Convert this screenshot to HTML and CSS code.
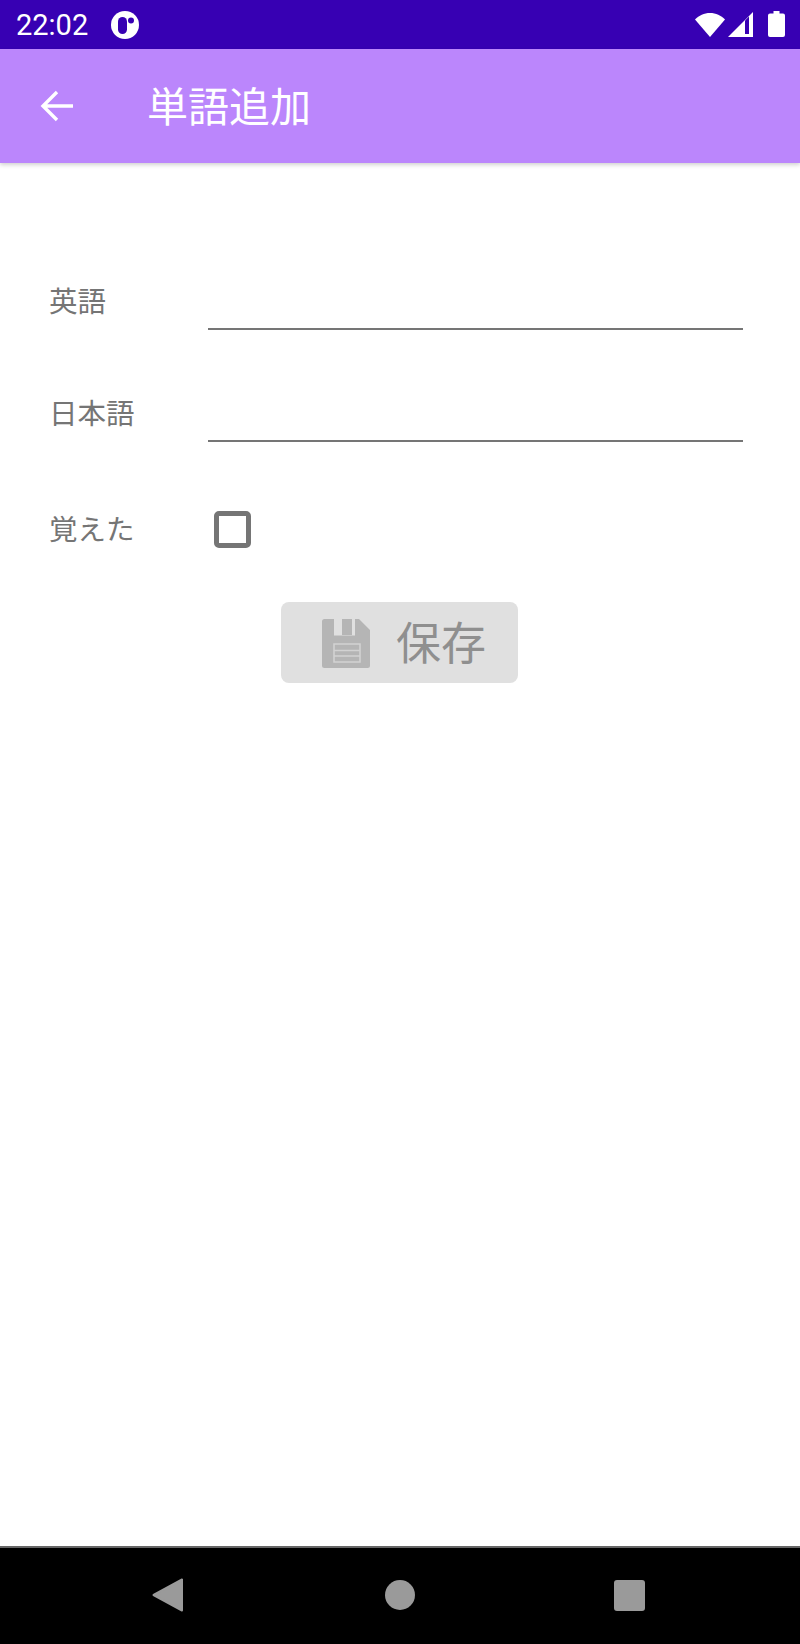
FILE: index.html
```html
<!DOCTYPE html>
<html lang="ja">
<head>
<meta charset="utf-8">
<title>単語追加</title>
<link rel="stylesheet" href="styles.css">
</head>
<body>
<div class="screen">
  <header class="status-bar">
    <div class="status-left">
      <span class="clock">22:02</span>
      <svg class="app-icon" width="30" height="30" viewBox="0 0 30 30"><circle cx="15" cy="15" r="14" fill="#fff"/><rect x="8" y="7" width="9" height="17" rx="4.500" fill="#3700b3"/><circle cx="21" cy="10.500" r="3" fill="#3700b3"/></svg>
    </div>
    <div class="status-right">
      <svg class="icon-wifi" width="30" height="24" viewBox="0 0 30 24"><path d="M0 6.500C4 2.500 9 0 15 0s11 2.500 15 6.500L15 24z" fill="#fff"/></svg>
      <svg class="icon-signal" width="25" height="25" viewBox="0 0 25 25"><path d="M25 0v25H0z" fill="#fff"/><path d="M17 8.500l4-4V22h-4z" fill="#3700b3"/></svg>
      <svg class="icon-battery" width="17" height="26" viewBox="0 0 17 26"><path d="M5.500 0h6v2.500H15a2 2 0 0 1 2 2V24a2 2 0 0 1-2 2H2a2 2 0 0 1-2-2V4.500a2 2 0 0 1 2-2h3.500z" fill="#fff"/></svg>
    </div>
  </header>
  <div class="app-bar">
    <svg class="back" width="34" height="32" viewBox="0 0 34 32"><path d="M33 16H3M17 2 3 16l14 14" fill="none" stroke="#fff" stroke-width="3.400"/></svg>
    <h1 class="title">単語追加</h1>
  </div>
  <main class="form">
    <div class="row row-en">
      <span class="label">英語</span>
      <span class="field"></span>
    </div>
    <div class="row row-ja">
      <span class="label">日本語</span>
      <span class="field"></span>
    </div>
    <div class="row row-check">
      <span class="label">覚えた</span>
      <span class="checkbox"></span>
    </div>
    <div class="actions">
      <div class="button">
        <svg class="save-icon" width="48" height="49" viewBox="0 0 48 49"><path fill-rule="evenodd" d="M2.500 0H37l11 11v35.500a2.500 2.500 0 0 1-2.500 2.500h-43A2.500 2.500 0 0 1 0 46.500v-44A2.500 2.500 0 0 1 2.500 0zM12 0h8v16h10V0h3v16.500H12z" fill="#b5b5b5"/><path d="M12 25h26v18H12zM12 31.500h26M12 37h26" fill="none" stroke="#d2d2d2" stroke-width="1.600"/></svg>
        <span class="button-text">保存</span>
      </div>
    </div>
  </main>
  <nav class="nav-bar">
    <svg class="nav-back" width="32" height="34" viewBox="0 0 32 34"><path d="M30 1.500v31L1.500 17z" fill="#9a9a9a" stroke="#9a9a9a" stroke-width="2" stroke-linejoin="round"/></svg>
    <span class="nav-circle"></span>
    <span class="nav-square"></span>
  </nav>
</div>
</body>
</html>
```
FILE: styles.css
```css
* { box-sizing: border-box; }
html, body { margin: 0; padding: 0; }
body { font-family: Roboto, "Noto Sans CJK JP", sans-serif; background: #fff; }
.screen { width: 800px; height: 1644px; display: flex; flex-direction: column; overflow: hidden; }
.status-bar { height: 49px; flex: none; background: #3700b3; display: flex; justify-content: space-between; align-items: center; padding: 0 15px 1px 16px; color: #fff; }
.status-left { display: flex; align-items: center; gap: 22px; margin-top: 2px; }
.clock { font-size: 29px; line-height: 48px; }
.status-right { display: flex; align-items: center; }
.icon-wifi { margin-top: 2px; }
.icon-signal { margin-left: 3px; margin-top: 1px; }
.icon-battery { margin-left: 15px; }
.app-bar { height: 114px; flex: none; background: #bb86fc; display: flex; align-items: center; padding: 0 0 0 40px; gap: 73px; box-shadow: 0 2px 4px rgba(0,0,0,.18); position: relative; color: #fff; }
.title { margin: 5px 0 0; font-size: 41px; font-weight: 400; line-height: 1.2; color: #fff; }
.form { flex: 1; display: flex; flex-direction: column; padding: 0 57px 0 49px; color: #757575; }
.row { display: flex; }
.label { width: 159px; flex: none; font-size: 28.500px; line-height: 42px; }
.row-en { margin-top: 119px; height: 48px; align-items: flex-start; }
.row-ja { margin-top: 64px; height: 48px; align-items: flex-start; }
.field { flex: 1; height: 48px; border-bottom: 2px solid #757575; }
.row-check { margin-top: 69px; align-items: center; height: 36px; }
.row-check .label { margin-top: 3px; }
.checkbox { width: 37px; height: 37px; margin-left: 6px; border: 5px solid #757575; border-radius: 5px; }
.actions { display: flex; justify-content: center; margin-top: 55px; padding-left: 7px; }
.button { width: 237px; height: 81px; background: #e0e0e0; border-radius: 8px; display: flex; align-items: center; padding-left: 41px; gap: 26px; }
.save-icon { margin-top: 2px; }
.button-text { font-size: 45px; line-height: 60px; color: #8f8f8f; margin-top: 5px; }
.nav-bar { height: 98px; flex: none; background: #000; border-top: 2px solid #666; display: flex; align-items: center; justify-content: space-between; padding: 0 155px 2px 152px; }
.nav-circle { width: 30px; height: 30px; border-radius: 50%; background: #9a9a9a; margin-left: 1px; }
.nav-square { width: 31px; height: 31px; border-radius: 3px; background: #9a9a9a; }
```
